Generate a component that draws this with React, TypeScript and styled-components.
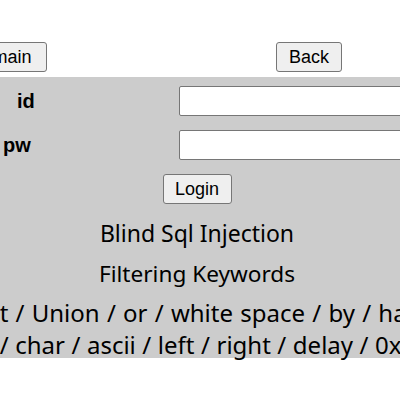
import styled, { createGlobalStyle } from "styled-components";

const GlobalStyle = createGlobalStyle`
  html, body {
    margin: 0;
    padding: 0;
    background: #fff;
    overflow: hidden;
  }
  #root {
    width: 400px;
    height: 400px;
    overflow: hidden;
  }
`;

const Page = styled.div`
  width: 400px;
  height: 400px;
  overflow: hidden;
  display: flex;
  flex-direction: column;
`;

const TopBar = styled.div`
  height: 77px;
  display: flex;
  align-items: flex-start;
  padding-top: 42px;
  box-sizing: border-box;
`;

const Button = styled.button<{ $width: number; $shift?: number }>`
  width: ${({ $width }) => $width}px;
  height: 30px;
  margin-left: ${({ $shift }) => $shift ?? 0}px;
  flex-shrink: 0;
  padding: 0;
  font-family: "Liberation Sans", Arial, sans-serif;
  font-size: 18px;
  color: #000;
  background: #efefef;
  border: 1px solid #767676;
  border-radius: 3px;
  text-align: center;
`;

const Panel = styled.div`
  background: #cccccc;
  height: 281px;
  padding-top: 9px;
  box-sizing: border-box;
  display: flex;
  flex-direction: column;
`;

const FieldRow = styled.div`
  display: grid;
  grid-template-columns: 179px 300px;
  align-items: center;
  height: 30px;
  margin-bottom: 14px;
`;

const FieldLabel = styled.label<{ $indent: number }>`
  padding-left: ${({ $indent }) => $indent}px;
  font-family: "Liberation Sans", Arial, sans-serif;
  font-weight: bold;
  font-size: 20px;
  color: #000;
`;

const TextInput = styled.input`
  height: 30px;
  box-sizing: border-box;
  border: 1px solid #767676;
  border-radius: 2px;
  background: #fff;
`;

const Center = styled.div`
  display: flex;
  justify-content: center;
  padding-right: 6px;
`;

const Heading = styled.div<{ $top: number; $size: number }>`
  margin-top: ${({ $top }) => $top}px;
  display: flex;
  justify-content: center;
  padding-right: 6px;
  white-space: nowrap;
  font-family: "Noto Sans", "Open Sans", sans-serif;
  font-size: ${({ $size }) => $size}px;
  line-height: 32px;
  color: #000;
`;

const Keywords = styled.div<{ $top?: number; $shift: number; $spacing: number }>`
  margin-top: ${({ $top }) => $top ?? 0}px;
  display: flex;
  justify-content: center;
  padding-right: ${({ $shift }) => $shift}px;
  white-space: nowrap;
  font-family: "Noto Sans", "Open Sans", sans-serif;
  font-size: 24px;
  word-spacing: ${({ $spacing }) => $spacing}px;
  line-height: 32px;
  color: #000;
`;

export default function App() {
  return (
    <Page>
      <GlobalStyle />
      <TopBar>
        <Button $width={70} $shift={-23}>
          main
        </Button>
        <Button $width={66} $shift={229}>
          Back
        </Button>
      </TopBar>
      <Panel>
        <FieldRow>
          <FieldLabel $indent={17}>id</FieldLabel>
          <TextInput name="id" />
        </FieldRow>
        <FieldRow>
          <FieldLabel $indent={3}>pw</FieldLabel>
          <TextInput name="pw" type="password" />
        </FieldRow>
        <Center>
          <Button $width={69}>Login</Button>
        </Center>
        <Heading $top={13} $size={23}>
          Blind Sql Injection
        </Heading>
        <Heading $top={9} $size={22.6}>
          Filtering Keywords
        </Heading>
        <Keywords $top={7} $shift={2} $spacing={1}>
          select / Union / or / white space / by / having
        </Keywords>
        <Keywords $shift={60} $spacing={0.3}>
          from / char / ascii / left / right / delay / 0x
        </Keywords>
      </Panel>
    </Page>
  );
}
